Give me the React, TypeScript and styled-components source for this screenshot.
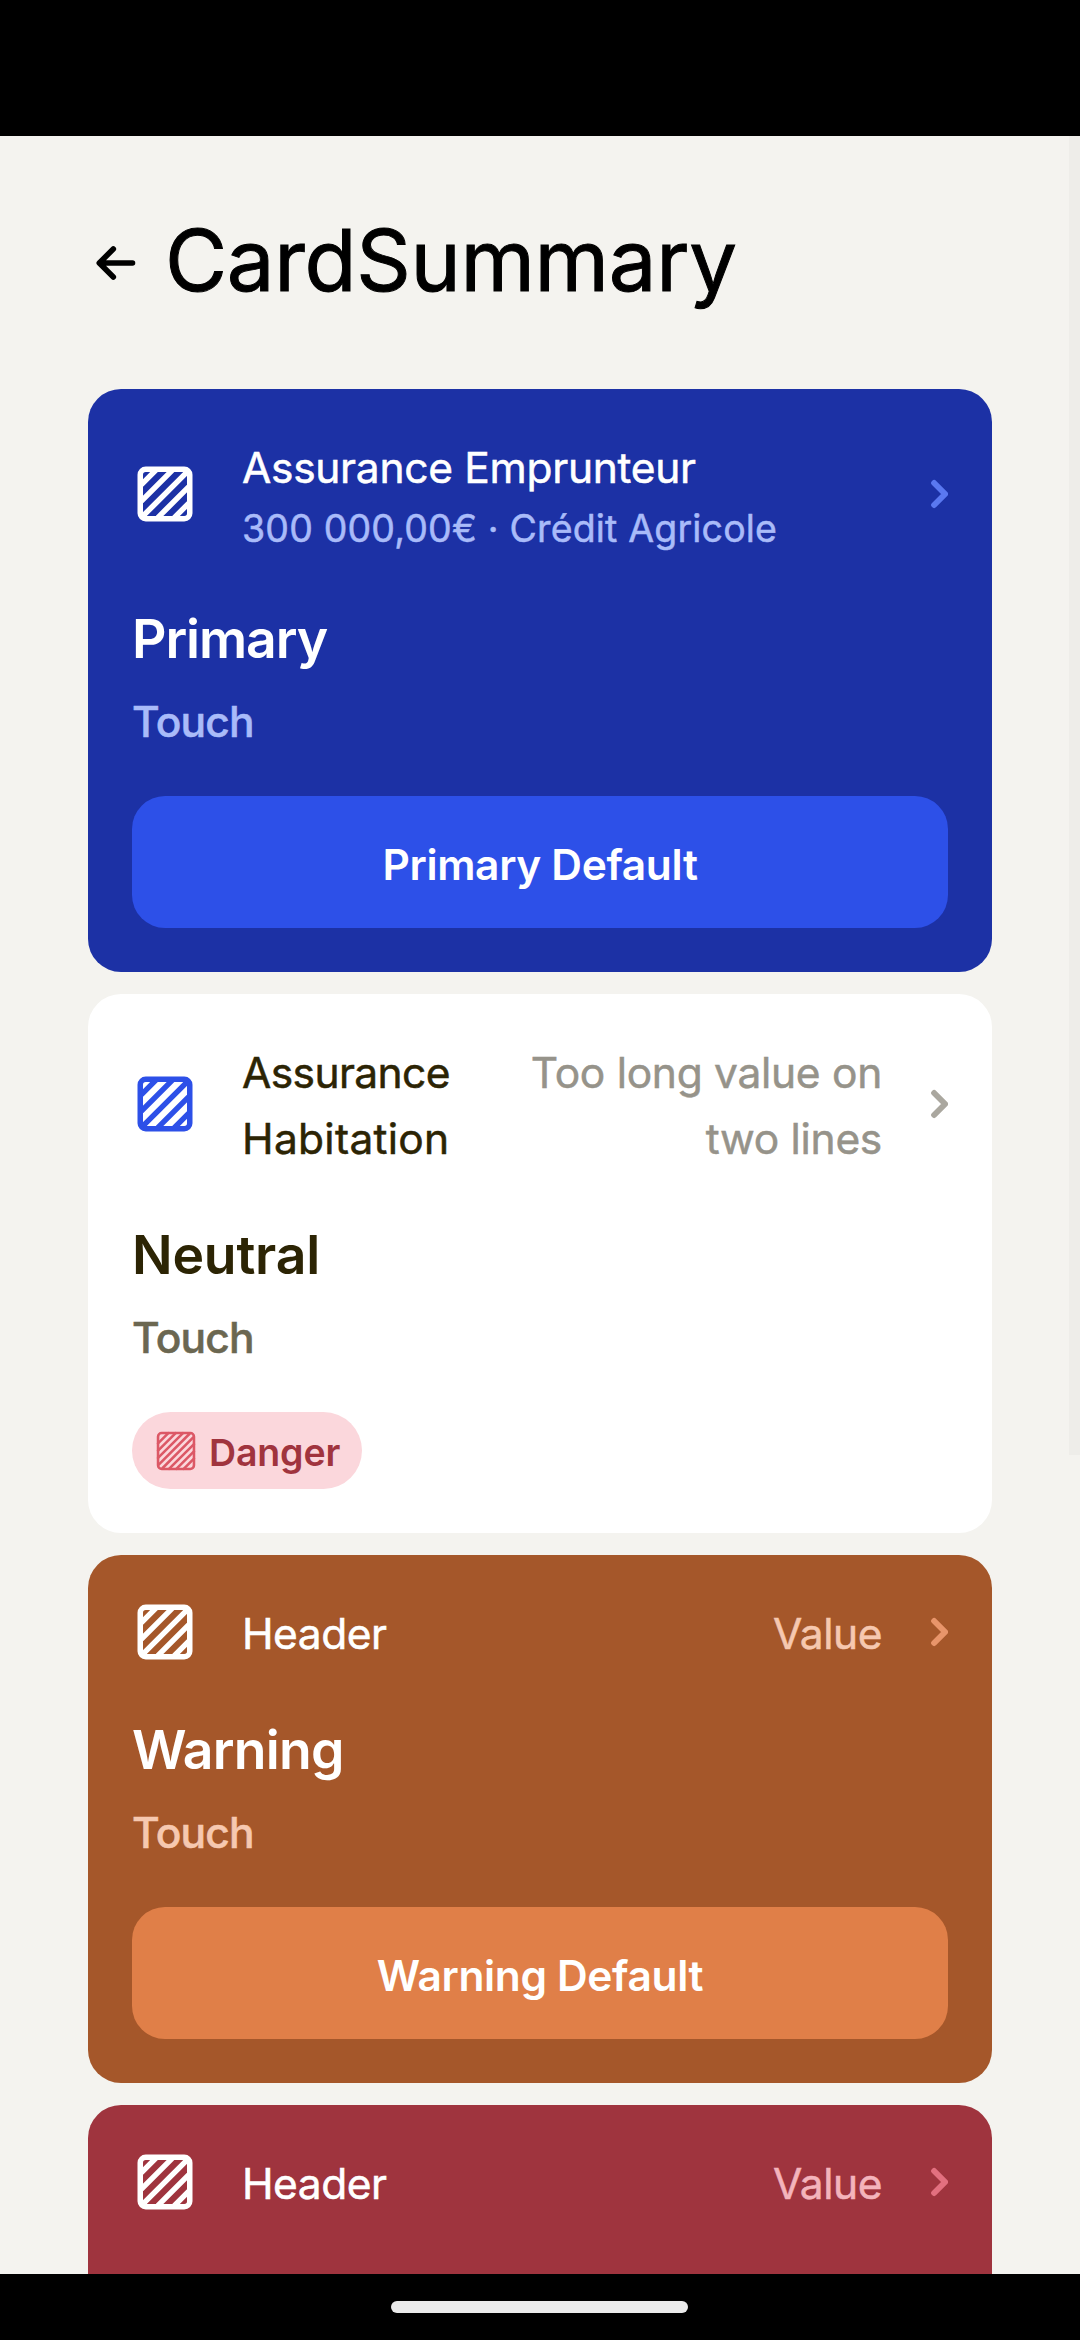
import React from "react";
import styled, { createGlobalStyle } from "styled-components";

const GlobalStyle = createGlobalStyle`
  *, *::before, *::after { box-sizing: border-box; }
  body {
    margin: 0;
    background: #000;
    font-family: Inter, Roboto, "Liberation Sans", sans-serif;
  }
`;

type Tone = {
  background: string;
  icon: string;
  label: string;
  muted: string;
  chevron: string;
  title: string;
  subtitle: string;
  button: string;
};

const tones: Record<"primary" | "neutral" | "warning" | "danger", Tone> = {
  primary: {
    background: "#1c31a5",
    icon: "#ffffff",
    label: "#ffffff",
    muted: "#a9bbf9",
    chevron: "#5a78f0",
    title: "#ffffff",
    subtitle: "#a9bbf9",
    button: "#2d50e8",
  },
  neutral: {
    background: "#ffffff",
    icon: "#2d50e8",
    label: "#2c2404",
    muted: "#96938a",
    chevron: "#aaa79f",
    title: "#2c2404",
    subtitle: "#6b6751",
    button: "#2d50e8",
  },
  warning: {
    background: "#a5572a",
    icon: "#ffffff",
    label: "#ffffff",
    muted: "#f6c8b0",
    chevron: "#e8956a",
    title: "#ffffff",
    subtitle: "#f6c8b0",
    button: "#e07f48",
  },
  danger: {
    background: "#9f343e",
    icon: "#ffffff",
    label: "#ffffff",
    muted: "#f4b4bc",
    chevron: "#e2707f",
    title: "#ffffff",
    subtitle: "#f4b4bc",
    button: "#dc5866",
  },
};

const Screen = styled.div`
  display: flex;
  flex-direction: column;
  width: 1080px;
  height: 2340px;
  overflow: hidden;
  background: #000;
`;

const StatusBar = styled.div`
  flex: none;
  height: 136px;
`;

const Viewport = styled.main`
  position: relative;
  flex: 1;
  min-height: 0;
  overflow: hidden;
  padding: 0 88px;
  background: #f4f3ef;
`;

const ScrollThumb = styled.div`
  position: absolute;
  top: 0;
  right: 0;
  width: 11px;
  height: 1319px;
  background: #eeede9;
`;

const PageHeader = styled.header`
  display: flex;
  align-items: center;
  gap: 22px;
  height: 253px;
`;

const PageTitle = styled.h1`
  margin: 0;
  padding-bottom: 4px;
  font-size: 85px;
  font-weight: 400;
  line-height: 110px;
  letter-spacing: -0.3px;
  color: #000;
  -webkit-text-stroke: 1px currentColor;
`;

const CardList = styled.div`
  display: flex;
  flex-direction: column;
  gap: 22px;
`;

const CardBox = styled.article<{ $background: string }>`
  display: flex;
  flex-direction: column;
  min-height: 528px;
  padding: 44px;
  border-radius: 33px;
  background: ${(p) => p.$background};
`;

const CardHeader = styled.div`
  display: flex;
  align-items: center;
  gap: 44px;
`;

const Labels = styled.div`
  display: flex;
  flex: 1;
  flex-direction: column;
`;

const Line = styled.span<{ $color: string; $tracking?: number }>`
  height: 66px;
  padding-top: 2px;
  font-size: 42.5px;
  font-weight: 400;
  line-height: 66px;
  letter-spacing: ${(p) => p.$tracking ?? 0}px;
  white-space: nowrap;
  color: ${(p) => p.$color};
  -webkit-text-stroke: 0.5px currentColor;
`;

const Description = styled(Line)`
  height: 55px;
  padding-top: 2px;
  font-size: 37.5px;
  line-height: 55px;
`;

const Values = styled.div`
  display: flex;
  flex-direction: column;
  align-items: flex-end;
`;

const CardTitle = styled.h2<{ $color: string; $tracking: number }>`
  height: 77px;
  margin: 44px 0 11px;
  padding-top: 2px;
  font-size: 53.5px;
  font-weight: 600;
  line-height: 77px;
  letter-spacing: ${(p) => p.$tracking}px;
  color: ${(p) => p.$color};
`;

const Subtitle = styled.p<{ $color: string }>`
  height: 66px;
  margin: 0 0 44px;
  padding-top: 3px;
  font-size: 42.5px;
  font-weight: 500;
  line-height: 66px;
  letter-spacing: -0.8px;
  color: ${(p) => p.$color};
  -webkit-text-stroke: 0.5px currentColor;
`;

const Button = styled.button<{ $background: string }>`
  height: 132px;
  padding: 4px 0 0;
  border: 0;
  border-radius: 33px;
  background: ${(p) => p.$background};
  font-family: inherit;
  font-size: 42.5px;
  font-weight: 600;
  letter-spacing: -0.36px;
  color: #fff;
`;

const Badge = styled.span`
  display: flex;
  align-items: center;
  align-self: flex-start;
  gap: 11px;
  height: 77px;
  padding: 0 22px;
  border-radius: 39px;
  background: #fbd7dc;
`;

const BadgeText = styled.span`
  padding-top: 4px;
  font-size: 37.5px;
  font-weight: 600;
  line-height: 55px;
  letter-spacing: -0.15px;
  color: #a0343e;
`;

const NavigationBar = styled.div`
  display: flex;
  flex: none;
  align-items: center;
  justify-content: center;
  height: 66px;
  padding-right: 1px;
`;

const HomeHandle = styled.div`
  width: 297px;
  height: 12px;
  border-radius: 6px;
  background: #ebebeb;
`;

const Icon = styled.svg`
  display: block;
  flex: none;
  fill: none;
  stroke-linecap: round;
  stroke-linejoin: round;
`;

const BackArrow = () => (
  <Icon width="55" height="55" viewBox="0 0 55 55" stroke="#000" strokeWidth="5.6">
    <path d="M44.5 28H11.5M25.3 14L11.3 28L25.3 42" />
  </Icon>
);

const HatchedSquare = ({ color }: { color: string }) => (
  <Icon width="66" height="66" viewBox="0 0 24 24" stroke={color} strokeWidth="2">
    <rect x="3" y="3" width="18" height="18" rx="2" />
    <path d="M3.5 8.5L8.5 3.5M3.5 14.5L14.5 3.5M4.3 19.7L19.7 4.3M9.5 20.5L20.5 9.5M15.5 20.5L20.5 15.5" />
  </Icon>
);

const FineHatchedSquare = ({ color }: { color: string }) => (
  <Icon width="44" height="44" viewBox="0 0 24 24" stroke={color} strokeWidth="1.4">
    <rect x="2.2" y="2.2" width="19.6" height="19.6" rx="2" />
    <path d="M2.2 7.8L7.8 2.2M2.2 11.8L11.8 2.2M2.2 15.8L15.8 2.2M2.6 19.4L19.4 2.6M4.6 21.4L21.4 4.6M8.2 21.8L21.8 8.2M12.2 21.8L21.8 12.2M16.2 21.8L21.8 16.2" />
  </Icon>
);

const Chevron = ({ color }: { color: string }) => (
  <Icon width="22" height="66" viewBox="0 0 8 24" stroke={color} strokeWidth="2.15">
    <path d="M2.95 8L6.95 12L2.95 16" />
  </Icon>
);

type TextLine = { text: string; tracking: number };

type CardProps = {
  tone: Tone;
  label: TextLine[];
  description?: TextLine;
  value?: TextLine[];
  title?: TextLine;
  subtitle?: string;
  children?: React.ReactNode;
};

const Card = ({ tone, label, description, value, title, subtitle, children }: CardProps) => (
  <CardBox $background={tone.background}>
    <CardHeader>
      <HatchedSquare color={tone.icon} />
      <Labels>
        {label.map((l) => (
          <Line key={l.text} $color={tone.label} $tracking={l.tracking}>
            {l.text}
          </Line>
        ))}
        {description && (
          <Description $color={tone.muted} $tracking={description.tracking}>
            {description.text}
          </Description>
        )}
      </Labels>
      {value && (
        <Values>
          {value.map((v) => (
            <Line key={v.text} $color={tone.muted} $tracking={v.tracking}>
              {v.text}
            </Line>
          ))}
        </Values>
      )}
      <Chevron color={tone.chevron} />
    </CardHeader>
    {title && (
      <CardTitle $color={tone.title} $tracking={title.tracking}>
        {title.text}
      </CardTitle>
    )}
    {subtitle && <Subtitle $color={tone.subtitle}>{subtitle}</Subtitle>}
    {children}
  </CardBox>
);

const header: TextLine[] = [{ text: "Header", tracking: -0.5 }];
const value: TextLine[] = [{ text: "Value", tracking: -0.45 }];

export default function App() {
  return (
    <Screen>
      <GlobalStyle />
      <StatusBar />
      <Viewport>
        <PageHeader>
          <BackArrow />
          <PageTitle>CardSummary</PageTitle>
        </PageHeader>
        <CardList>
          <Card
            tone={tones.primary}
            label={[{ text: "Assurance Emprunteur", tracking: -0.3 }]}
            description={{ text: "300 000,00€ · Crédit Agricole", tracking: 0.17 }}
            title={{ text: "Primary", tracking: -1.1 }}
            subtitle="Touch"
          >
            <Button $background={tones.primary.button}>Primary Default</Button>
          </Card>
          <Card
            tone={tones.neutral}
            label={[
              { text: "Assurance", tracking: -0.6 },
              { text: "Habitation", tracking: 0.3 },
            ]}
            value={[
              { text: "Too long value on", tracking: -0.3 },
              { text: "two lines", tracking: -0.3 },
            ]}
            title={{ text: "Neutral", tracking: -0.2 }}
            subtitle="Touch"
          >
            <Badge>
              <FineHatchedSquare color="#dc5866" />
              <BadgeText>Danger</BadgeText>
            </Badge>
          </Card>
          <Card
            tone={tones.warning}
            label={header}
            value={value}
            title={{ text: "Warning", tracking: -0.75 }}
            subtitle="Touch"
          >
            <Button $background={tones.warning.button}>Warning Default</Button>
          </Card>
          <Card tone={tones.danger} label={header} value={value} />
        </CardList>
        <ScrollThumb />
      </Viewport>
      <NavigationBar>
        <HomeHandle />
      </NavigationBar>
    </Screen>
  );
}
